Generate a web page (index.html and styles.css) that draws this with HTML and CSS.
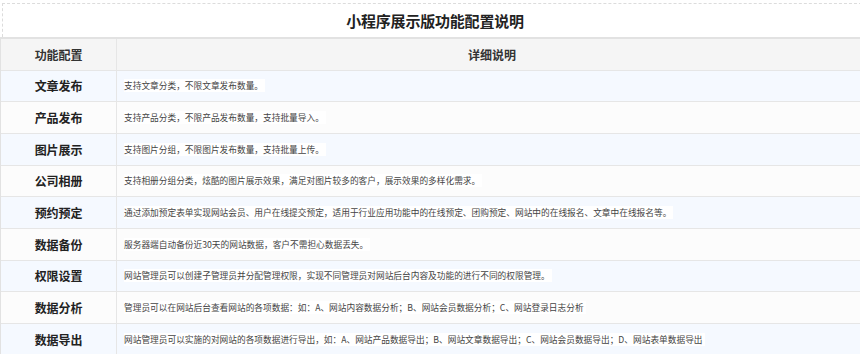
FILE: index.html
```html
<!DOCTYPE html>
<html lang="zh-CN">
<head>
<meta charset="utf-8">
<title>小程序展示版功能配置说明</title>
<link rel="stylesheet" href="styles.css">
</head>
<body>
<div class="title">小程序展示版功能配置说明</div>
<div class="table">
  <div class="row head"><div class="lab">功能配置</div><div class="hd">详细说明</div></div>
  <div class="row odd"><div class="lab">文章发布</div><div class="desc"><span>支持文章分类，不限文章发布数量。</span></div></div>
  <div class="row even"><div class="lab">产品发布</div><div class="desc"><span>支持产品分类，不限产品发布数量，支持批量导入。</span></div></div>
  <div class="row odd"><div class="lab">图片展示</div><div class="desc"><span>支持图片分组，不限图片发布数量，支持批量上传。</span></div></div>
  <div class="row even"><div class="lab">公司相册</div><div class="desc"><span>支持相册分组分类，炫酷的图片展示效果，满足对图片较多的客户，展示效果的多样化需求。</span></div></div>
  <div class="row odd"><div class="lab">预约预定</div><div class="desc"><span>通过添加预定表单实现网站会员、用户在线提交预定，适用于行业应用功能中的在线预定、团购预定、网站中的在线报名、文章中在线报名等。</span></div></div>
  <div class="row even"><div class="lab">数据备份</div><div class="desc"><span>服务器端自动备份近30天的网站数据，客户不需担心数据丢失。</span></div></div>
  <div class="row odd"><div class="lab">权限设置</div><div class="desc"><span>网站管理员可以创建子管理员并分配管理权限，实现不同管理员对网站后台内容及功能的进行不同的权限管理。</span></div></div>
  <div class="row even"><div class="lab">数据分析</div><div class="desc"><span>管理员可以在网站后台查看网站的各项数据：如：A、网站内容数据分析；B、网站会员数据分析；C、网站登录日志分析</span></div></div>
  <div class="row odd"><div class="lab">数据导出</div><div class="desc"><span>网站管理员可以实施的对网站的各项数据进行导出，如：A、网站产品数据导出；B、网站文章数据导出；C、网站会员数据导出；D、网站表单数据导出</span></div></div>
</div>
</body>
</html>
```

FILE: styles.css
```css
html, body {
  margin: 0;
  padding: 0;
  overflow: hidden;
  background: #ffffff;
}
body {
  font-family: "Noto Sans CJK SC", "Noto Sans", sans-serif;
  color: #333;
  width: 860px;
  height: 354px;
}
.title {
  margin: 3px 0 0 2px;
  width: 864px;
  height: 33px;
  border-top: 1px dashed #dcdcdc;
  border-left: 1px dashed #dcdcdc;
  display: flex;
  align-items: center;
  justify-content: center;
  font-size: 15px;
  font-weight: 700;
  color: #222;
  letter-spacing: -0.2px;
}
.table {
  width: 866px;
  border-top: 2px solid #e2e2e2;
  border-left: 1px solid #e2e2e2;
}
.row {
  display: grid;
  grid-template-columns: 116px 1fr;
  height: 31.67px;
  box-sizing: border-box;
  border-bottom: 1px solid #e6e6e6;
}
.head { background: #f5f5f5; }
.odd { background: #f5f9ff; }
.even { background: #fcfcfc; }
.lab {
  border-right: 1px solid #e6e6e6;
  display: flex;
  align-items: center;
  justify-content: center;
  font-size: 12px;
  font-weight: 700;
  color: #222;
  letter-spacing: -0.1px;
}
.head .lab {
  font-weight: 600;
  color: #333;
}
.hd {
  display: flex;
  align-items: center;
  justify-content: center;
  font-size: 12px;
  font-weight: 600;
  color: #333;
}
.desc {
  display: flex;
  align-items: center;
  padding-left: 7px;
  font-size: 8.7px;
  color: #444;
}
.desc span {
  background: #ffffff;
  padding: 1px 2px 1px 0;
  line-height: 11px;
}
```
